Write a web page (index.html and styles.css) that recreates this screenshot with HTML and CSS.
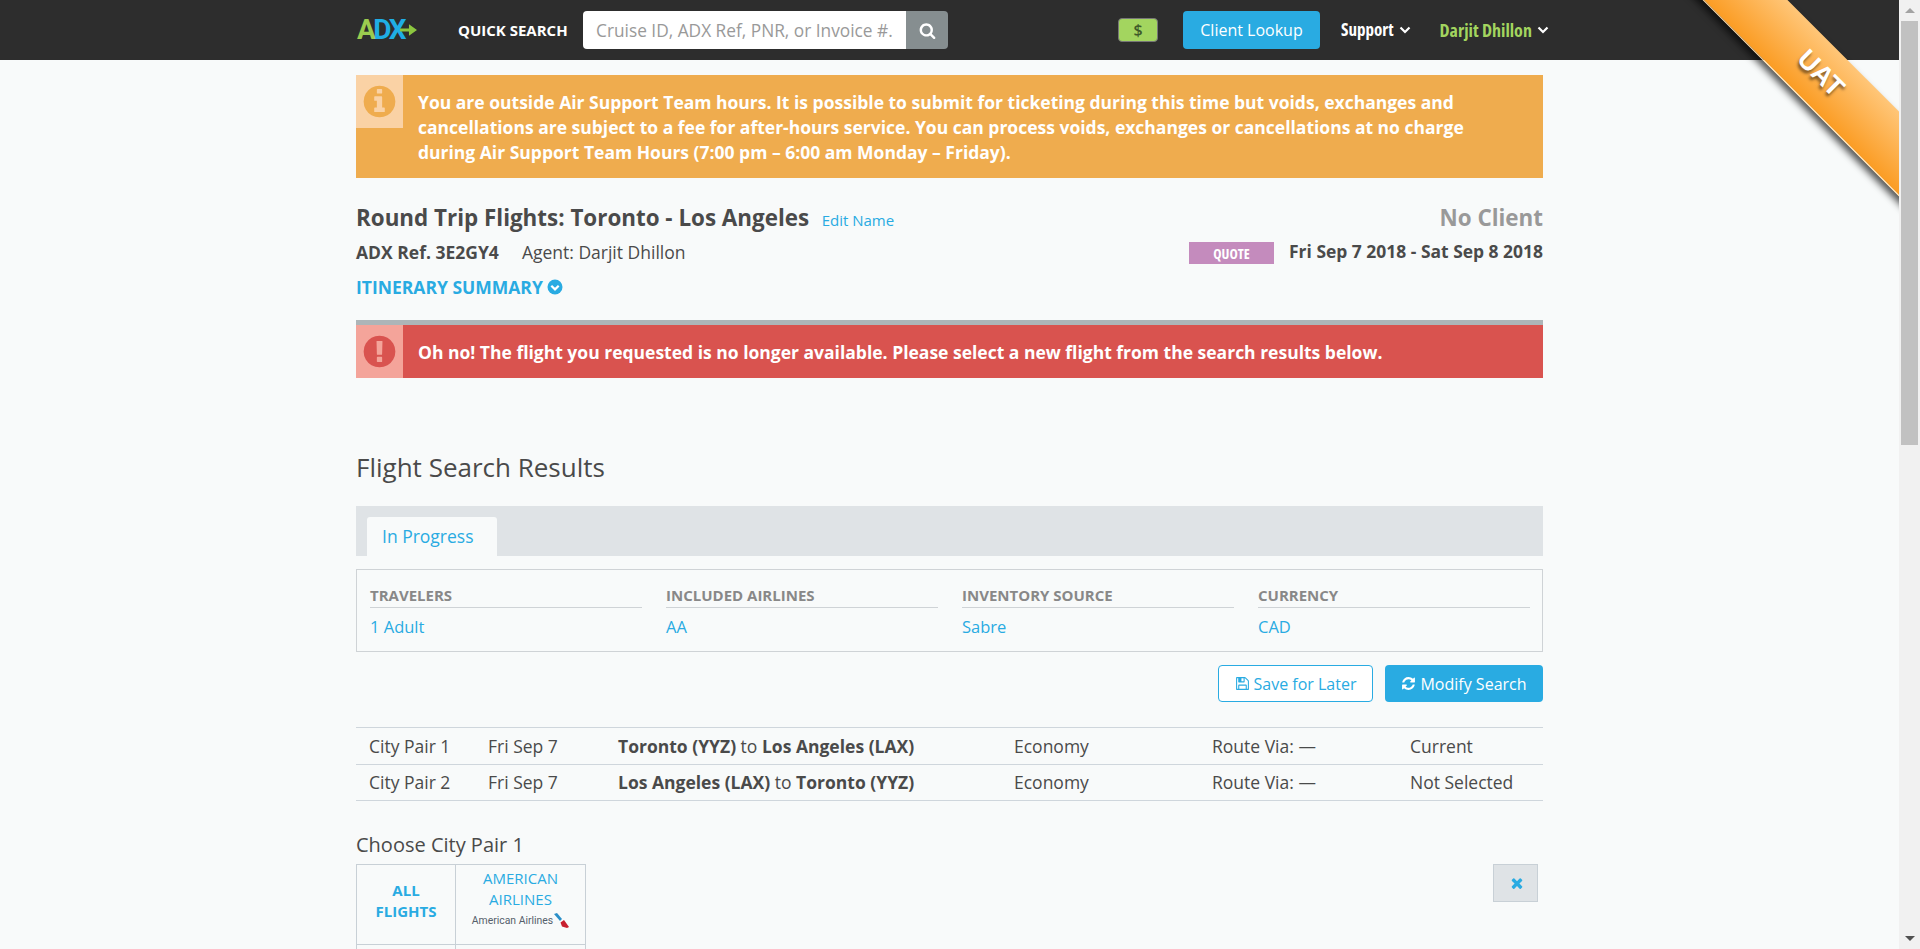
FILE: index.html
```html
<!DOCTYPE html>
<html lang="en">
<head>
  <meta charset="UTF-8">
  <meta name="viewport" content="width=device-width, initial-scale=1.0">
  <title>Flight Search Results</title>
  <link rel="stylesheet" href="styles.css">
</head>
<body>
  <div class="app">
    <div class="page">
      <header class="topbar">
        <div class="wrap topbar-inner">
          <a class="logo"><span class="logo-a">A</span>DX
            <svg class="logo-arrow" viewBox="0 0 18 14"><path d="M0 5.500h9.500V1L18 7l-8.500 6V8.500H0z"/></svg>
          </a>
          <span class="quick-label">QUICK SEARCH</span>
          <div class="quick-search">
            <input type="text" placeholder="Cruise ID, ADX Ref, PNR, or Invoice #.">
            <button class="quick-btn">
              <svg class="icon-search" viewBox="0 0 1792 1792"><path d="M1216 832q0-185-131.500-316.500t-316.500-131.500-316.500 131.500-131.500 316.500 131.500 316.500 316.500 131.500 316.500-131.500 131.500-316.500zm512 832q0 52-38 90t-90 38q-54 0-90-38l-343-342q-179 124-399 124-143 0-273.500-55.500t-225-150-150-225-55.500-273.500 55.500-273.500 150-225 225-150 273.500-55.500 273.500 55.500 225 150 150 225 55.500 273.500q0 220-124 399l343 343q37 37 37 90z"/></svg>
            </button>
          </div>
          <span class="money">$</span>
          <button class="lookup">Client Lookup</button>
          <a class="nav-link">Support
            <svg class="chev" viewBox="0 0 12 8"><path d="M1.500 1.500 6 6l4.500-4.500"/></svg>
          </a>
          <a class="nav-link nav-user">Darjit Dhillon
            <svg class="chev" viewBox="0 0 12 8"><path d="M1.500 1.500 6 6l4.500-4.500"/></svg>
          </a>
        </div>
      </header>

      <div class="ribbon-clip"><div class="ribbon">UAT</div></div>

      <main class="wrap">
        <div class="alert alert-warn">
          <div class="alert-icon">
            <svg viewBox="0 0 1792 1792"><path d="M1152 1376v-160q0-14-9-23t-23-9h-96v-512q0-14-9-23t-23-9h-320q-14 0-23 9t-9 23v160q0 14 9 23t23 9h96v320h-96q-14 0-23 9t-9 23v160q0 14 9 23t23 9h448q14 0 23-9t9-23zm-128-896v-160q0-14-9-23t-23-9h-192q-14 0-23 9t-9 23v160q0 14 9 23t23 9h192q14 0 23-9t9-23zm640 416q0 209-103 385.500t-279.500 279.500-385.500 103-385.500-103-279.500-279.500-103-385.500 103-385.500 279.500-279.500 385.500-103 385.500 103 279.500 279.500 103 385.500z"/></svg>
          </div>
          <p>You are outside Air Support Team hours. It is possible to submit for ticketing during this time but voids, exchanges and cancellations are subject to a fee for after-hours service. You can process voids, exchanges or cancellations at no charge during Air Support Team Hours (7:00 pm – 6:00 am Monday – Friday).</p>
        </div>

        <div class="trip-row trip-title">
          <div>
            <h1>Round Trip Flights: Toronto - Los Angeles</h1>
            <a class="edit-name">Edit Name</a>
          </div>
          <div class="no-client">No Client</div>
        </div>
        <div class="trip-row trip-meta">
          <div><b>ADX Ref. 3E2GY4</b><span class="agent">Agent: Darjit Dhillon</span></div>
          <div class="trip-dates"><span class="badge-quote">QUOTE</span><b>Fri Sep 7 2018 - Sat Sep 8 2018</b></div>
        </div>
        <a class="itin-link">ITINERARY SUMMARY
          <svg viewBox="0 0 16 16"><circle cx="8" cy="8" r="7.500"/><path class="itin-chev" d="M4.300 6.800 8 10.400l3.700-3.600"/></svg>
        </a>

        <div class="alert alert-error">
          <div class="alert-icon">
            <svg viewBox="0 0 1792 1792"><path d="M896 128q209 0 385.500 103t279.500 279.500 103 385.500-103 385.500-279.500 279.500-385.500 103-385.500-103-279.500-279.500-103-385.500 103-385.500 279.500-279.500 385.500-103zm128 1247v-190q0-14-9-23.500t-22-9.500h-192q-13 0-23 10t-10 23v190q0 13 10 23t23 10h192q13 0 22-9.500t9-23.500zm-2-344l18-621q0-12-10-18-10-8-24-8h-220q-14 0-24 8-10 6-10 18l17 621q0 10 10 17.500t24 7.500h185q14 0 23.500-7.500t10.500-17.500z"/></svg>
          </div>
          <p>Oh no! The flight you requested is no longer available. Please select a new flight from the search results below.</p>
        </div>

        <h2>Flight Search Results</h2>

        <div class="tabs"><a class="tab">In Progress</a></div>

        <div class="summary">
          <div class="summary-col"><h4>TRAVELERS</h4><a>1 Adult</a></div>
          <div class="summary-col"><h4>INCLUDED AIRLINES</h4><a>AA</a></div>
          <div class="summary-col"><h4>INVENTORY SOURCE</h4><a>Sabre</a></div>
          <div class="summary-col"><h4>CURRENCY</h4><a>CAD</a></div>
        </div>

        <div class="actions">
          <button class="btn btn-outline">
            <svg viewBox="0 0 1792 1792"><path d="M512 1536h768v-384h-768v384zm896 0h128v-896q0-14-10-38.500t-20-34.500l-281-281q-10-10-34-20t-39-10v416q0 40-28 68t-68 28h-576q-40 0-68-28t-28-68v-416h-128v1280h128v-416q0-40 28-68t68-28h832q40 0 68 28t28 68v416zm-384-928v-320q0-13-9.500-22.500t-22.500-9.500h-192q-13 0-22.500 9.500t-9.500 22.500v320q0 13 9.500 22.500t22.500 9.500h192q13 0 22.500-9.500t9.500-22.500zm640 32v928q0 40-28 68t-68 28h-1344q-40 0-68-28t-28-68v-1344q0-40 28-68t68-28h928q40 0 88 20t76 48l280 280q28 28 48 76t20 88z"/></svg>
            Save for Later
          </button>
          <button class="btn btn-solid">
            <svg viewBox="0 0 1792 1792"><path d="M1639 1056q0 5-1 7-64 268-268 434.500t-478 166.500q-146 0-282.500-55t-243.500-157l-129 129q-19 19-45 19t-45-19-19-45v-448q0-26 19-45t45-19h448q26 0 45 19t19 45-19 45l-137 137q71 66 161 102t187 36q134 0 250-65t186-179q11-17 53-117 8-23 30-23h192q13 0 22.500 9.500t9.500 22.500zm25-800v448q0 26-19 45t-45 19h-448q-26 0-45-19t-19-45 19-45l138-138q-148-137-349-137-134 0-250 65t-186 179q-11 17-53 117-8 23-30 23h-199q-13 0-22.500-9.500t-9.500-22.500v-7q65-268 270-434.500t480-166.500q146 0 284 55.500t245 156.500l130-129q19-19 45-19t45 19 19 45z"/></svg>
            Modify Search
          </button>
        </div>

        <table class="pairs">
          <colgroup>
            <col class="c-pair"><col class="c-date"><col class="c-route"><col class="c-cabin"><col class="c-via"><col class="c-state">
          </colgroup>
          <tr><td>City Pair 1</td><td>Fri Sep 7</td><td><b>Toronto (YYZ)</b> to <b>Los Angeles (LAX)</b></td><td>Economy</td><td>Route Via: —</td><td>Current</td></tr>
          <tr class="pairs-last"><td>City Pair 2</td><td>Fri Sep 7</td><td><b>Los Angeles (LAX)</b> to <b>Toronto (YYZ)</b></td><td>Economy</td><td>Route Via: —</td><td>Not Selected</td></tr>
        </table>

        <h3>Choose City Pair 1</h3>

        <div class="matrix-row">
          <table class="matrix">
            <tr>
              <td class="m-all"><a>ALL<br>FLIGHTS</a></td>
              <td class="m-air">
                <a>AMERICAN<br>AIRLINES</a>
                <div class="aa-logo">American Airlines
                  <svg viewBox="0 0 15 15"><path class="aa-blue" d="M0 1l3-1 5 6-2 2z"/><path class="aa-red" d="M6.500 9.500 10 7l5 7-2 1-5-1.500z"/></svg>
                </div>
              </td>
            </tr>
            <tr class="m-next"><td></td><td></td></tr>
          </table>
          <button class="close-btn">
            <svg viewBox="0 0 1792 1792"><path d="M1490 1322q0 40-28 68l-136 136q-28 28-68 28t-68-28l-294-294-294 294q-28 28-68 28t-68-28l-136-136q-28-28-28-68t28-68l294-294-294-294q-28-28-28-68t28-68l136-136q28-28 68-28t68 28l294 294 294-294q28-28 68-28t68 28l136 136q28 28 28 68t-28 68l-294 294 294 294q28 28 28 68z"/></svg>
          </button>
        </div>
      </main>
    </div>

    <div class="scrollbar">
      <div class="sb-btn"><span class="sb-up"></span></div>
      <div class="sb-thumb"></div>
      <div class="sb-track"></div>
      <div class="sb-btn"><span class="sb-down"></span></div>
    </div>
  </div>
</body>
</html>
```

FILE: styles.css
```css
* {
  box-sizing: border-box;
}
html, body {
  margin: 0;
  height: 100%;
  overflow: hidden;
}
body {
  font-family: "Open Sans", sans-serif;
  font-size: 17.500px;
  line-height: 22px;
  color: #4a4a4a;
  background: #f8fafa;
}
a {
  color: #29abe2;
  text-decoration: none;
}
button {
  font-family: inherit;
  border: none;
}
.app {
  display: flex;
  height: 949px;
}
.page {
  position: relative;
  flex: 1;
  min-width: 0;
  overflow: hidden;
}
.wrap {
  width: 1187px;
  margin: 0 auto;
}

/* top bar */
.topbar {
  height: 60px;
  background: #2d2d2d;
}
.topbar-inner {
  display: flex;
  align-items: center;
  height: 60px;
}
.topbar-inner > * {
  flex: none;
  white-space: nowrap;
}
.logo {
  position: relative;
  width: 102px;
  padding-left: 1px;
  font-family: Roboto, sans-serif;
  font-size: 28px;
  font-weight: 700;
  letter-spacing: -2.500px;
  color: #1faee5;
}
.logo-a {
  color: #9bcb4f;
}
.logo-arrow {
  position: absolute;
  left: 44px;
  top: 4px;
  width: 17px;
  height: 14px;
  fill: #8cc63f;
}
.quick-label {
  width: 125px;
  font-size: 15px;
  font-weight: 700;
  color: #fff;
}
.quick-search {
  display: flex;
  width: 365px;
  height: 38px;
  border-radius: 4px;
  overflow: hidden;
}
.quick-search input {
  flex: 1;
  min-width: 0;
  border: none;
  padding: 0 0 0 13px;
  font-family: inherit;
  font-size: 17.300px;
  background: #fff;
}
.quick-search input::placeholder {
  color: #999;
}
.quick-btn {
  width: 42px;
  background: #868e90;
  padding: 0;
}
.icon-search {
  display: block;
  width: 17px;
  height: 17px;
  margin: 0 auto;
  fill: #fff;
}
.money {
  width: 40px;
  height: 24px;
  margin-left: 170px;
  border: 1px solid #777;
  border-radius: 4px;
  background: #a3d55f;
  text-align: center;
  font-size: 16px;
  font-weight: 600;
  color: #3f5a2a;
}
.lookup {
  width: 137px;
  height: 38px;
  margin-left: 25px;
  border-radius: 4px;
  background: #29abe2;
  color: #fff;
  font-size: 16px;
}
.nav-link {
  display: flex;
  align-items: center;
  margin-left: 21px;
  font-size: 17px;
  font-stretch: condensed;
  font-weight: 700;
  color: #fff;
}
.nav-user {
  margin-left: 29px;
  font-size: 18px;
  color: #a3d55f;
}
.chev {
  width: 12px;
  height: 8px;
  margin-left: 5px;
  fill: none;
  stroke: #fff;
  stroke-width: 2.200;
}

/* environment ribbon */
.ribbon-clip {
  position: absolute;
  top: 0;
  right: 0;
  width: 240px;
  height: 240px;
  overflow: hidden;
}
.ribbon {
  position: absolute;
  left: -7px;
  top: 47px;
  width: 340px;
  height: 60px;
  padding-right: 7px;
  transform: rotate(45deg);
  background: linear-gradient(to bottom, #ffc678, #fb9c24);
  border-bottom: 1px solid #ffdca8;
  box-shadow: 0 5px 7px rgba(0, 0, 0, 0.65);
  font-family: "Liberation Sans", sans-serif;
  font-size: 27px;
  font-weight: 700;
  line-height: 56px;
  text-align: center;
  color: #fff;
  text-shadow: 1px 3px 3px rgba(0, 0, 0, 0.5);
}

/* alerts */
.alert {
  display: flex;
  color: #fff;
  font-weight: 700;
  line-height: 25px;
}
.alert p {
  margin: 0;
}
.alert-icon {
  flex: none;
  width: 47px;
  height: 53px;
  padding-left: 5px;
  padding-top: 8px;
}
.alert-icon svg {
  display: block;
  width: 37px;
  height: 37px;
}
.alert-warn {
  margin-top: 15px;
  background: #efac4e;
}
.alert-warn .alert-icon {
  background: #fad2a5;
}
.alert-warn .alert-icon svg {
  fill: #efac4e;
}
.alert-warn p {
  padding: 15px 70px 13px 15px;
}
.alert-error {
  margin-top: 22px;
  border-top: 5px solid #adb5b8;
  background: #d9534f;
}
.alert-error .alert-icon {
  background: #f4a49a;
}
.alert-error .alert-icon svg {
  fill: #d9534f;
}
.alert-error p {
  padding: 15px 15px 13px;
}

/* trip heading */
.trip-row {
  display: flex;
  justify-content: space-between;
  align-items: center;
}
.trip-title {
  margin-top: 25px;
  height: 30px;
}
h1 {
  display: inline;
  margin: 0;
  font-size: 22.400px;
  font-weight: 700;
  line-height: 30px;
}
.edit-name {
  margin-left: 8px;
  font-size: 15px;
}
.no-client {
  font-size: 22.400px;
  font-weight: 700;
  color: #999;
}
.trip-meta {
  height: 22px;
  margin-top: 8px;
}
.agent {
  margin-left: 23px;
}
.trip-dates {
  display: flex;
  align-items: flex-start;
  font-size: 17.450px;
}
.badge-quote {
  width: 85px;
  height: 22px;
  margin: 2px 15px 0 0;
  background: #c48bbd;
  text-align: center;
  font-size: 14px;
  font-stretch: condensed;
  font-weight: 700;
  line-height: 24px;
  color: #fff;
}
.itin-link {
  display: flex;
  align-items: center;
  margin-top: 13px;
  font-weight: 700;
}
.itin-link svg {
  width: 16px;
  height: 16px;
  margin-left: 4px;
  fill: #29abe2;
}
.itin-chev {
  fill: none;
  stroke: #fff;
  stroke-width: 2.200;
}

/* results */
h2 {
  margin: 72px 0 0;
  font-size: 26px;
  font-weight: 400;
  line-height: 34px;
}
.tabs {
  height: 50px;
  margin-top: 22px;
  padding: 11px 0 0 11px;
  background: #dfe3e6;
}
.tab {
  display: block;
  width: 130px;
  height: 39px;
  padding: 8px 0 0 15px;
  border-radius: 3px 3px 0 0;
  background: #f8fafa;
}
.summary {
  display: grid;
  grid-template-columns: repeat(4, 1fr);
  gap: 24px;
  height: 83px;
  margin-top: 13px;
  padding: 15px 12px 0 13px;
  border: 1px solid #cfd3d6;
}
.summary h4 {
  margin: 0 0 7px;
  padding-bottom: 1px;
  border-bottom: 1px solid #cfd3d6;
  font-size: 15px;
  font-weight: 700;
  line-height: 21px;
  color: #888;
}
.summary a {
  font-size: 16.500px;
}
.actions {
  display: flex;
  justify-content: flex-end;
  gap: 12px;
  margin-top: 13px;
}
.btn {
  display: flex;
  align-items: center;
  justify-content: center;
  height: 37px;
  border-radius: 4px;
  font-size: 16px;
}
.btn svg {
  width: 15px;
  height: 15px;
  margin-right: 4px;
  fill: currentColor;
}
.btn-outline {
  width: 155px;
  border: 1px solid #29abe2;
  background: #fff;
  color: #29abe2;
}
.btn-solid {
  width: 158px;
  background: #29abe2;
  color: #fff;
}
.pairs {
  width: 100%;
  margin-top: 25px;
  border-collapse: collapse;
  table-layout: fixed;
}
.c-pair { width: 119px; }
.c-date { width: 130px; }
.c-route { width: 396px; }
.c-cabin { width: 198px; }
.c-via { width: 198px; }
.pairs td {
  padding: 7px 0 7px 13px;
  border-top: 1px solid #cfd6dc;
  border-bottom: 1px solid #cfd6dc;
}
.pairs-last td {
  padding-top: 6px;
}

/* airline matrix */
h3 {
  margin: 32px 0 7px;
  font-size: 20px;
  font-weight: 400;
  line-height: 24px;
}
.matrix-row {
  display: flex;
  justify-content: space-between;
  align-items: flex-start;
}
.matrix {
  width: 230px;
  border-collapse: collapse;
  table-layout: fixed;
  text-align: center;
  font-size: 15px;
  line-height: 21px;
}
.matrix td {
  padding: 0;
  border: 1px solid #c8d0d6;
}
.m-all {
  width: 99px;
  height: 80px;
  font-weight: 700;
}
.m-all a {
  display: block;
  margin-bottom: 7px;
}
.m-air {
  vertical-align: top;
}
.m-air a {
  display: block;
  margin-top: 3px;
}
.aa-logo {
  display: flex;
  align-items: center;
  justify-content: center;
  font-family: Roboto, sans-serif;
  font-size: 10.400px;
  color: #555f6b;
}
.aa-logo svg {
  width: 15px;
  height: 15px;
  margin-left: 1px;
}
.aa-blue { fill: #2a8fc8; }
.aa-red { fill: #c8202f; }
.m-next td {
  height: 50px;
}
.close-btn {
  width: 45px;
  height: 38px;
  margin-right: 5px;
  border: 1px solid #c8d0d6;
  background: #dfe3e6;
  padding: 0 0 0 3px;
}
.close-btn svg {
  display: block;
  width: 16px;
  height: 16px;
  margin: 0 auto;
  fill: #29abe2;
}

/* scroll bar */
.scrollbar {
  flex: none;
  display: flex;
  flex-direction: column;
  width: 21px;
  padding: 0 2px;
  background: #f1f1f1;
}
.sb-btn {
  display: flex;
  align-items: center;
  justify-content: center;
  height: 21px;
}
.sb-up {
  border: 5px solid transparent;
  border-top: none;
  border-bottom: 5px solid #a3a3a3;
}
.sb-down {
  border: 5px solid transparent;
  border-bottom: none;
  border-top: 5px solid #505050;
}
.sb-thumb {
  height: 424px;
  background: #c1c1c1;
}
.sb-track {
  flex: 1;
}
```
